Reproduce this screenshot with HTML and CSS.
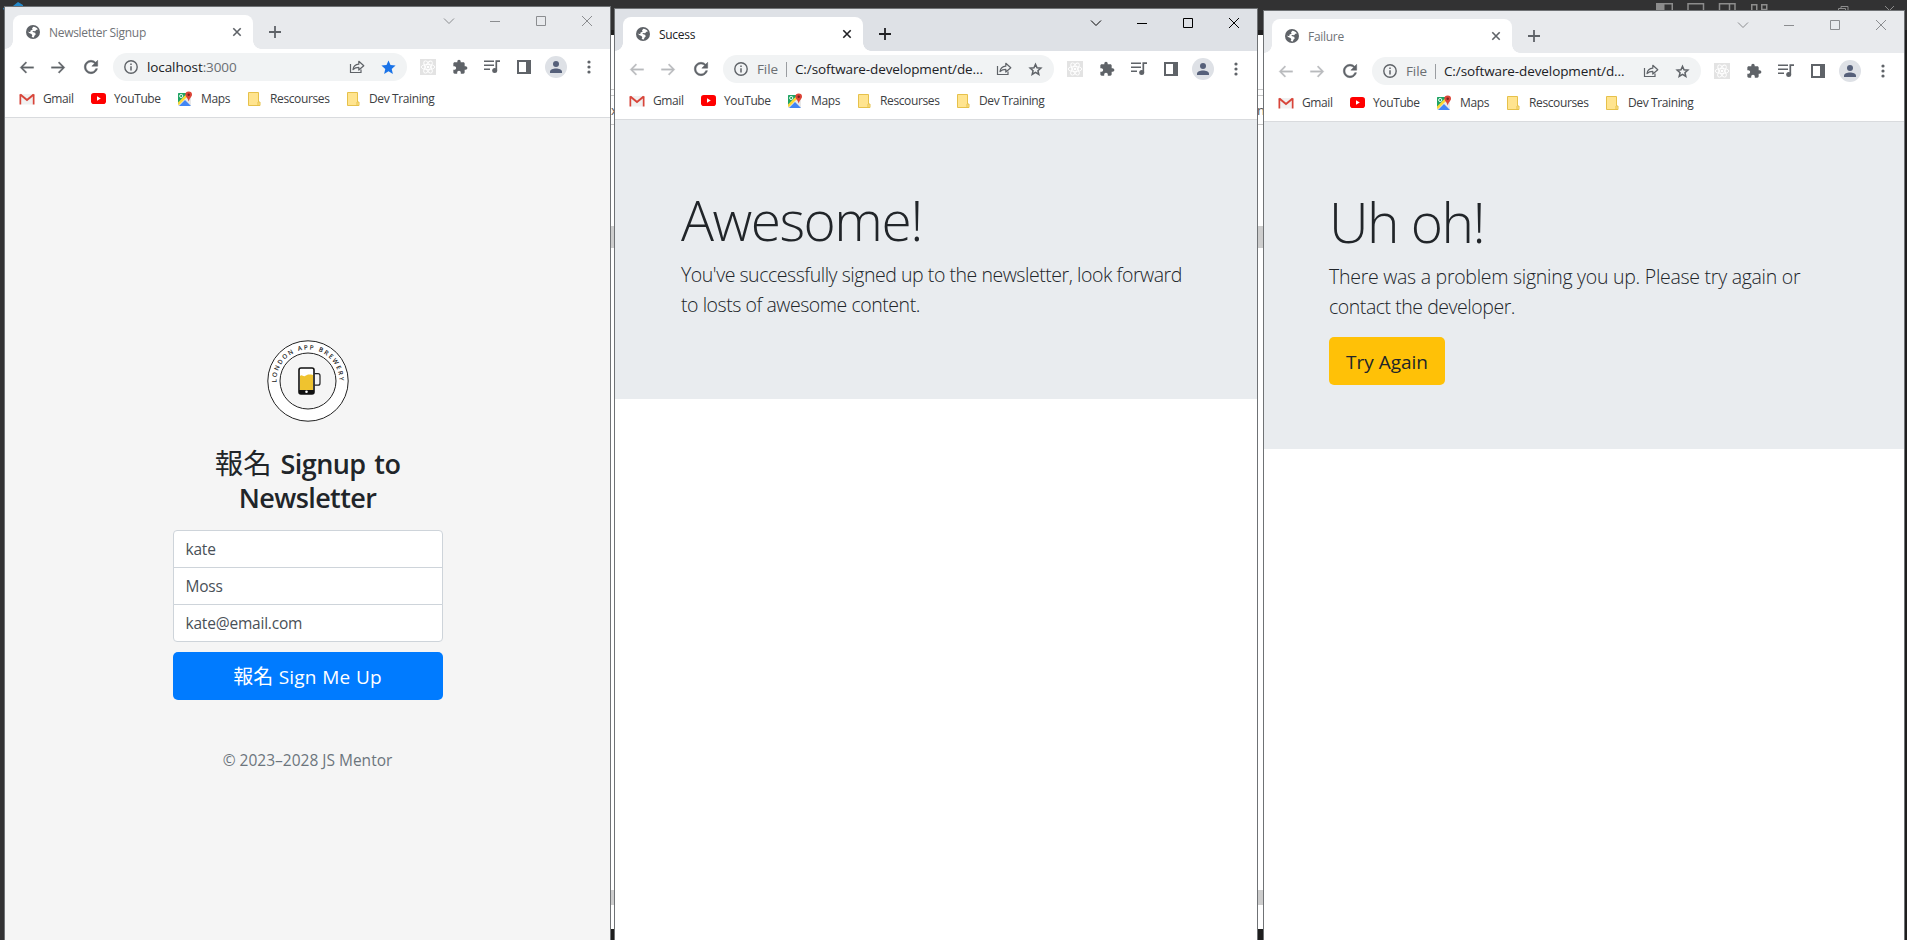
FILE: index.html
```html
<!DOCTYPE html>
<html lang="en">
<head>
<meta charset="utf-8">
<title>Newsletter Signup</title>
<link rel="stylesheet" href="styles.css">
</head>
<body>
<svg class="defs" width="0" height="0">
  <symbol id="globe" viewBox="0 0 14 14"><circle cx="7" cy="7" r="7" fill="#5f6368"/><path d="M7.300 1.700c1.800.1 3.600 1 4.600 2.800l-1.500.2-1.300 1.600-1.600-.3-1.300.5 1.700 1.100 1.300.2.500 1.600-1.300 1.400-.5 1.700-2.300-.5.700-1.500-.8-1.400-1.900-.8L1.600 6.600l1.500.3 1.200 0 .3-1.400 2-.7L6 3.500z" fill="#fff"/></symbol>
  <symbol id="x" viewBox="0 0 10 10"><path d="M1.300 1.300l7.400 7.400M8.700 1.300L1.300 8.700" fill="none" stroke="currentColor" stroke-width="1.600"/></symbol>
  <symbol id="plus" viewBox="0 0 12 12"><path d="M6 0v12M0 6h12" fill="none" stroke="currentColor" stroke-width="1.800"/></symbol>
  <symbol id="chev" viewBox="0 0 12 12"><path d="M1 3.500l5 5 5-5" fill="none" stroke="currentColor"/></symbol>
  <symbol id="min" viewBox="0 0 10 10"><path d="M0 5.500h10" fill="none" stroke="currentColor"/></symbol>
  <symbol id="max" viewBox="0 0 10 10"><path d="M.5.5h9v9h-9z" fill="none" stroke="currentColor"/></symbol>
  <symbol id="close" viewBox="0 0 10 10"><path d="M0 0l10 10M10 0L0 10" fill="none" stroke="currentColor"/></symbol>
  <symbol id="back" viewBox="0 0 24 24"><path d="M22 11H6.830l5.590-5.590L11 4l-8 8 8 8 1.410-1.410L6.830 13H22z" fill="currentColor" stroke="currentColor" stroke-width=".5"/></symbol>
  <symbol id="reload" viewBox="0 0 24 24"><path d="M17.650 6.350C16.200 4.900 14.210 4 12 4c-4.420 0-7.990 3.580-7.990 8s3.570 8 7.990 8c3.730 0 6.840-2.550 7.730-6h-2.080c-.82 2.330-3.040 4-5.650 4-3.310 0-6-2.690-6-6s2.690-6 6-6c1.660 0 3.140.69 4.220 1.780L13 11h7V4z" fill="currentColor" stroke="currentColor" stroke-width=".6"/></symbol>
  <symbol id="info" viewBox="0 0 14 14"><circle cx="7" cy="7" r="6.200" fill="none" stroke="#5f6368" stroke-width="1.400"/><path d="M7 6.200v4.300M7 3.500v1.500" stroke="#5f6368" stroke-width="1.500"/></symbol>
  <symbol id="share" viewBox="0 0 16 16"><path d="M1.500 5v8.500h10.500v-3" fill="none" stroke="#5f6368" stroke-width="1.200"/><path d="M4 10.500c.4-3 2.200-5 5.800-5.300V2.300L14.800 6.800 9.800 11V8.300C7.300 8.300 5.500 9 4 10.500z" fill="none" stroke="#5f6368" stroke-width="1.200" stroke-linejoin="round"/></symbol>
  <symbol id="star" viewBox="0 0 24 24"><path d="M12 17.270L18.180 21l-1.640-7.030L22 9.240l-7.190-.61L12 2 9.190 8.630 2 9.240l5.460 4.730L5.820 21z" fill="#1a73e8"/></symbol>
  <symbol id="staro" viewBox="0 0 24 24"><path d="M12 16.200L16.700 19l-1.250-5.300 4.100-3.600-5.400-.5L12 4.700 9.850 9.600l-5.400.5 4.100 3.600L7.300 19z" fill="none" stroke="#5f6368" stroke-width="2.100"/></symbol>
  <symbol id="react" viewBox="0 0 16 16"><path d="M0 0h16v16H0z" fill="#e3e3e3"/><g fill="none" stroke="#fff" stroke-width=".9"><ellipse cx="8" cy="8" rx="6.800" ry="2.600"/><ellipse cx="8" cy="8" rx="6.800" ry="2.600" transform="rotate(60 8 8)"/><ellipse cx="8" cy="8" rx="6.800" ry="2.600" transform="rotate(120 8 8)"/></g><circle cx="8" cy="8" r="1.300" fill="#fff"/></symbol>
  <symbol id="puzzle" viewBox="0 0 24 24"><path d="M20.500 11H19V7c0-1.100-.9-2-2-2h-4V3.500C13 2.120 11.880 1 10.500 1S8 2.120 8 3.500V5H4c-1.100 0-1.990.9-1.990 2v3.800H3.500c1.490 0 2.700 1.210 2.700 2.700s-1.210 2.700-2.700 2.700H2V20c0 1.100.9 2 2 2h3.800v-1.500c0-1.490 1.210-2.700 2.700-2.700s2.700 1.210 2.700 2.700V22H17c1.100 0 2-.9 2-2v-4h1.500c1.380 0 2.500-1.120 2.500-2.500S21.880 11 20.500 11z" fill="#5f6368"/></symbol>
  <symbol id="queue" viewBox="0 0 16 14"><path d="M0 1.200h10M0 5.200h10M0 9.200h6" stroke="#5f6368" stroke-width="1.600"/><path d="M12.300 10.500V1.200h3.700" fill="none" stroke="#5f6368" stroke-width="1.700"/><circle cx="10.700" cy="10.600" r="2.500" fill="#5f6368"/></symbol>
  <symbol id="panel" viewBox="0 0 14 14"><path d="M1 1h12v12H1z" fill="#fff" stroke="#5f6368" stroke-width="2"/><path d="M9 1h4v12H9z" fill="#5f6368"/></symbol>
  <symbol id="avatar" viewBox="0 0 22 22"><circle cx="11" cy="11" r="11" fill="#dee1e6"/><circle cx="11" cy="8" r="3" fill="#56607a"/><path d="M5 17v-1.300c0-2.200 3.200-3.200 6-3.200s6 1 6 3.200V17z" fill="#56607a"/></symbol>
  <symbol id="dots" viewBox="0 0 4 14"><g fill="#5f6368"><circle cx="2" cy="2" r="1.600"/><circle cx="2" cy="7" r="1.600"/><circle cx="2" cy="12" r="1.600"/></g></symbol>
  <symbol id="gmail" viewBox="0 0 16 12"><path d="M2 1h12v10.500H2z" fill="#f1f1f1"/><path d="M.5 11.500V1.200h1.700V11.500zM13.800 11.500V1.200h1.700V11.500z" fill="#d8453a"/><path d="M1.300 1.500L8 7l6.700-5.500" fill="none" stroke="#d8453a" stroke-width="2"/></symbol>
  <symbol id="youtube" viewBox="0 0 15 11"><rect width="15" height="11" rx="2.800" fill="#f00"/><path d="M6 3.200v4.600L9.800 5.500z" fill="#fff"/></symbol>
  <symbol id="maps" viewBox="0 0 16 16"><rect x="1" y="2" width="13" height="13" rx="1" fill="#e8e8e8"/><path d="M1 3c0-.6.400-1 1-1h9L1 13z" fill="#1fa463"/><path d="M2 15l6-6 6 6z" fill="#4285f4"/><path d="M1 11.500L10.500 2H12v2L1.500 14.500z" fill="#fdd835"/><circle cx="4.200" cy="5" r="1.600" fill="none" stroke="#fff" stroke-width=".9"/><path d="M11.700.5a3.300 3.300 0 0 1 3.300 3.300c0 2-2.300 3-3.300 6.700-1-3.700-3.300-4.700-3.300-6.700A3.300 3.300 0 0 1 11.700.5z" fill="#dc4437"/><circle cx="11.700" cy="3.800" r="1.200" fill="#7b231e"/></symbol>
  <symbol id="folder" viewBox="0 0 13 14"><path d="M.5.500h10v9.500h1.500v3.500H.5z" fill="#ffe48f" stroke="#e6c14b"/><path d="M10 10v3.500" stroke="#e6c14b"/></symbol>
</svg>

<main class="desktop">
  <div class="behind"><i class="taskline"></i><span class="under-text left">x</span><span class="under-text">nu</span><i class="thumb upper"></i><i class="thumb lower"></i></div>
  <svg class="code-logo" width="20" height="14" viewBox="0 0 20 14"><path d="M10 6l5-4 5 3v2h-10zM0 8l3-1v8z" fill="#2489ca"/></svg>
  <svg class="layout-icons" width="250" height="9" viewBox="0 0 250 9" fill="none" stroke="#8c8c8c">
    <path d="M.75 9V.75h15.500V9M32 9V.75h15.500V9M63.500 9V.75h15.500V9M73.500 1v8" stroke-width="1.500"/><path d="M1 1h7v8H1z" fill="#8c8c8c"/><path d="M95.750 9V1.750h5V9M105.750 6.500v-4.750h5v4.750z" stroke-width="1.500"/>
    <path d="M182.500 9V5.500h7V9M185 5V3.500h7V9M229 3l9 9M238 3l-9 9"/>
  </svg>

  <section class="window signup inactive">
    <header class="strip">
      <div class="tab"><svg class="fav"><use href="#globe"/></svg><span class="tab-title">Newsletter Signup</span><svg class="tab-x"><use href="#x"/></svg></div>
      <svg class="new-tab"><use href="#plus"/></svg>
      <div class="controls"><svg class="chev"><use href="#chev"/></svg><svg><use href="#min"/></svg><svg><use href="#max"/></svg><svg><use href="#close"/></svg></div>
    </header>
    <nav class="toolbar">
      <svg class="nav-icon"><use href="#back"/></svg><svg class="nav-icon forward"><use href="#back"/></svg><svg class="nav-icon reload"><use href="#reload"/></svg>
      <div class="omnibox"><svg class="info"><use href="#info"/></svg><span class="url">localhost<span class="muted">:3000</span></span><svg class="share"><use href="#share"/></svg><svg class="star"><use href="#star"/></svg></div>
      <div class="tools"><svg class="react"><use href="#react"/></svg><svg class="puzzle"><use href="#puzzle"/></svg><svg class="queue"><use href="#queue"/></svg><svg class="panel"><use href="#panel"/></svg><svg class="avatar"><use href="#avatar"/></svg><svg class="dots"><use href="#dots"/></svg></div>
    </nav>
    <nav class="bookmarks"><a class="gmail"><svg><use href="#gmail"/></svg>Gmail</a><a class="youtube"><svg><use href="#youtube"/></svg>YouTube</a><a class="maps"><svg><use href="#maps"/></svg>Maps</a><a class="folder res"><svg><use href="#folder"/></svg>Rescourses</a><a class="folder dev"><svg><use href="#folder"/></svg>Dev Training</a></nav>
    <div class="page">
      <form class="form">
        <svg class="brand" width="82" height="82" viewBox="0 0 82 82">
          <circle cx="41" cy="41" r="34.200" fill="none" stroke="#fff" stroke-width="12.200"/>
          <circle cx="41" cy="41" r="40.200" fill="none" stroke="#222" stroke-width="1"/>
          <circle cx="41" cy="41" r="28" fill="none" stroke="#222" stroke-width="1"/>
          <path id="arc" d="M9.600 43.500A31.500 31.500 0 1 1 72.400 43.500" fill="none"/>
          <text class="ring"><textPath href="#arc" startOffset="1" textLength="100">LONDON APP BREWERY</textPath></text>
          <rect x="32" y="28" width="15" height="26" rx="2" fill="#fff" stroke="#111" stroke-width="1.600"/>
          <path d="M33 36c2-2 3 1 5 0s3-2 8-1v15H33z" fill="#efc32f"/><path d="M32 50h15v4H32z" fill="#111"/><circle cx="39.500" cy="51.800" r="1.300" fill="#fff"/>
          <path d="M47.500 33.700h3.500a2 2 0 0 1 2 2v7.500a2 2 0 0 1-2 2h-3.500" fill="none" stroke="#222" stroke-width="1.200"/>
        </svg>
        <h1><span class="han">報名</span> Signup to<br>Newsletter</h1>
        <div class="field first">kate</div>
        <div class="field">Moss</div>
        <div class="field last">kate@email.com</div>
        <button type="button" class="btn primary"><span class="han">報名</span> Sign Me Up</button>
        <p class="copyright">© 2023–2028 JS Mentor</p>
      </form>
    </div>
  </section>

  <section class="window success">
    <header class="strip">
      <div class="tab"><svg class="fav"><use href="#globe"/></svg><span class="tab-title">Sucess</span><svg class="tab-x"><use href="#x"/></svg></div>
      <svg class="new-tab"><use href="#plus"/></svg>
      <div class="controls"><svg class="chev"><use href="#chev"/></svg><svg><use href="#min"/></svg><svg><use href="#max"/></svg><svg><use href="#close"/></svg></div>
    </header>
    <nav class="toolbar">
      <svg class="nav-icon off"><use href="#back"/></svg><svg class="nav-icon forward off"><use href="#back"/></svg><svg class="nav-icon reload"><use href="#reload"/></svg>
      <div class="omnibox"><svg class="info"><use href="#info"/></svg><span class="scheme">File</span><span class="url">C:/software-development/de...</span><svg class="share"><use href="#share"/></svg><svg class="star"><use href="#staro"/></svg></div>
      <div class="tools"><svg class="react"><use href="#react"/></svg><svg class="puzzle"><use href="#puzzle"/></svg><svg class="queue"><use href="#queue"/></svg><svg class="panel"><use href="#panel"/></svg><svg class="avatar"><use href="#avatar"/></svg><svg class="dots"><use href="#dots"/></svg></div>
    </nav>
    <nav class="bookmarks"><a class="gmail"><svg><use href="#gmail"/></svg>Gmail</a><a class="youtube"><svg><use href="#youtube"/></svg>YouTube</a><a class="maps"><svg><use href="#maps"/></svg>Maps</a><a class="folder res"><svg><use href="#folder"/></svg>Rescourses</a><a class="folder dev"><svg><use href="#folder"/></svg>Dev Training</a></nav>
    <div class="page">
      <div class="jumbotron">
        <h1>Awesome!</h1>
        <p class="lead">You've successfully signed up to the newsletter, look forward<br>to losts of awesome content.</p>
      </div>
    </div>
  </section>

  <section class="window failure inactive">
    <header class="strip">
      <div class="tab"><svg class="fav"><use href="#globe"/></svg><span class="tab-title">Failure</span><svg class="tab-x"><use href="#x"/></svg></div>
      <svg class="new-tab"><use href="#plus"/></svg>
      <div class="controls"><svg class="chev"><use href="#chev"/></svg><svg><use href="#min"/></svg><svg><use href="#max"/></svg><svg><use href="#close"/></svg></div>
    </header>
    <nav class="toolbar">
      <svg class="nav-icon off"><use href="#back"/></svg><svg class="nav-icon forward off"><use href="#back"/></svg><svg class="nav-icon reload"><use href="#reload"/></svg>
      <div class="omnibox"><svg class="info"><use href="#info"/></svg><span class="scheme">File</span><span class="url">C:/software-development/d...</span><svg class="share"><use href="#share"/></svg><svg class="star"><use href="#staro"/></svg></div>
      <div class="tools"><svg class="react"><use href="#react"/></svg><svg class="puzzle"><use href="#puzzle"/></svg><svg class="queue"><use href="#queue"/></svg><svg class="panel"><use href="#panel"/></svg><svg class="avatar"><use href="#avatar"/></svg><svg class="dots"><use href="#dots"/></svg></div>
    </nav>
    <nav class="bookmarks"><a class="gmail"><svg><use href="#gmail"/></svg>Gmail</a><a class="youtube"><svg><use href="#youtube"/></svg>YouTube</a><a class="maps"><svg><use href="#maps"/></svg>Maps</a><a class="folder res"><svg><use href="#folder"/></svg>Rescourses</a><a class="folder dev"><svg><use href="#folder"/></svg>Dev Training</a></nav>
    <div class="page">
      <div class="jumbotron">
        <h1>Uh oh!</h1>
        <p class="lead"><span class="wide">There was a problem signing you up. Please try again or</span><br>contact the developer.</p>
        <button type="button" class="btn warning">Try Again</button>
      </div>
    </div>
  </section>
</main>
</body>
</html>
```
FILE: styles.css
```css
* { box-sizing: border-box; }
body { margin: 0; font-family: "Open Sans", "Noto Sans", "Noto Sans CJK TC", sans-serif; color: #212529; overflow: hidden; }
svg { display: block; flex: none; }
.defs { position: absolute; }
.desktop { position: relative; width: 1907px; height: 940px; overflow: hidden; background: #323233; }

/* editor window that shows through the gaps */
.behind { position: absolute; left: 600px; top: 30px; width: 1307px; height: 910px; background: linear-gradient(#1f1f1f 5px, #fff 5px 899px, #1e1e1e 899px); }
.behind::after { content: ""; position: absolute; left: 1303px; top: 0; width: 4px; height: 910px; background: #1e1e1e; }
.under-text { position: absolute; left: 657px; top: 71px; font-size: 13px; color: #555; }
.under-text.left { left: 11px; }
.thumb { position: absolute; left: 0; width: 680px; background: #cdcdcd; }
.thumb.upper { top: 196px; height: 22px; }
.thumb.lower { top: 860px; height: 15px; }
.taskline { position: absolute; left: 0; width: 680px; top: 59px; height: 36px; border-top: 1px solid #c8c8c8; border-bottom: 1px solid #c8c8c8; background: linear-gradient(#fff 5px, #c8c8c8 5px 6px, transparent 6px); }
.code-logo { position: absolute; left: 3px; top: 0; }
.layout-icons { position: absolute; left: 1656px; top: 3px; }

.window { position: absolute; display: flex; flex-direction: column; bottom: 0; background: #fff; border-top: 1px solid #6f7275; border-right: 1px solid #6f7275; box-shadow: -1px 0 #6f7275; }
.signup { left: 5px; width: 606px; top: 6px; }
.success { left: 615px; width: 643px; top: 8px; }
.failure { left: 1264px; width: 641px; top: 10px; }

.strip { display: flex; height: 42px; padding: 8px 0 0 8px; background: #dee1e6; color: #202124; }
.inactive .strip { background: #e8eaed; color: #5f6368; }
.tab { position: relative; display: flex; align-items: center; width: 240px; height: 34px; padding: 0 11px 0 13px; border-radius: 8px 8px 0 0; background: #fff; }
.tab::before, .tab::after { content: ""; position: absolute; bottom: 0; width: 8px; height: 8px; }
.tab::before { left: -8px; background: radial-gradient(circle at 0 0, transparent 7.500px, #fff 8px); }
.tab::after { right: -8px; background: radial-gradient(circle at 100% 0, transparent 7.500px, #fff 8px); }
.fav { width: 14px; height: 14px; margin-right: 9px; }
.tab-title { flex: 1; font-size: 12px; letter-spacing: -.3px; white-space: nowrap; }
.inactive .tab-title { color: #6f7377; }
.tab-x { width: 10px; height: 10px; }
.new-tab { width: 12px; height: 12px; margin: 11px 0 0 16px; }
.controls { display: flex; align-items: center; gap: 36px; height: 12px; margin: 0 18px 0 auto; color: #000; }
.inactive .controls { color: #8b8d90; }
.controls svg { width: 10px; height: 10px; }
.controls .chev { width: 12px; height: 12px; margin-right: -1px; }

.toolbar { display: flex; align-items: center; height: 36px; padding: 0 19px 0 13px; color: #5f6368; }
.nav-icon { width: 17px; height: 17px; margin-right: 15px; }
.forward { transform: scaleX(-1); }
.reload { width: 20px; height: 20px; margin: 0 12px 0 -1px; }
.off { color: #b9bbbe; }
.omnibox { display: flex; flex: 1; align-items: center; height: 28px; padding: 0 10px 0 11px; border-radius: 14px; background: #f1f3f4; font-size: 13.500px; letter-spacing: -.1px; color: #202124; }
.info { width: 14px; height: 14px; margin-right: 9px; }
.url { flex: 1; white-space: nowrap; }
.muted { color: #6b6f73; }
.scheme { padding-right: 8px; margin-right: 8px; border-right: 1px solid #9a9da1; line-height: 15px; color: #6b6f73; }
.share { width: 16px; height: 16px; margin-right: 15px; }
.star { width: 17px; height: 17px; }
.tools { display: flex; align-items: center; padding-left: 13px; }
.react { width: 16px; height: 16px; margin-right: 16px; }
.puzzle { width: 16px; height: 16px; margin-right: 16px; }
.queue { width: 16px; height: 14px; margin-right: 17px; }
.panel { width: 14px; height: 14px; margin-right: 14px; }
.avatar { width: 22px; height: 22px; margin-right: 20px; }
.dots { width: 4px; height: 14px; }

.bookmarks { display: flex; align-items: center; height: 33px; padding: 0 0 5px 14px; border-bottom: 1px solid #d9dbde; font-size: 12px; letter-spacing: -.38px; color: #3c4043; }
.bookmarks a { display: flex; align-items: center; white-space: nowrap; }
.gmail { width: 72px; }
.youtube { width: 86px; }
.maps { width: 71px; }
.res { width: 99px; }
.bookmarks svg { margin-right: 8px; }
.gmail svg { width: 16px; height: 12px; }
.youtube svg { width: 15px; height: 11px; }
.maps svg { width: 16px; height: 16px; }
.folder svg { width: 13px; height: 14px; margin-right: 9px; }

.page { flex: 1; }
.signup .page { display: flex; justify-content: center; padding-top: 222px; background: #f5f5f5; }
.form { display: flex; flex-direction: column; width: 270px; text-align: center; }
.brand { align-self: center; margin-bottom: 25px; }
.ring { font: 600 6.300px "Open Sans", sans-serif; fill: #222; }
.form h1 { margin: 0 0 16px; font-size: 27px; font-weight: 600; line-height: 33.600px; letter-spacing: -.6px; word-spacing: 2.500px; white-space: nowrap; }
.han { font-family: "Noto Sans CJK TC", sans-serif; font-weight: 400; letter-spacing: 0; line-height: 1; }
.form h1 .han { font-size: 28.500px; }
.field { height: 38px; margin-bottom: -1px; padding: 0 12px; border: 1px solid #ced4da; background: #fff; font-size: 15.500px; line-height: 37px; letter-spacing: -.2px; text-align: left; color: #495057; }
.first { border-radius: 4px 4px 0 0; }
.last { margin-bottom: 10px; border-radius: 0 0 4px 4px; }
.btn { height: 48px; padding: 0; border: 0; border-radius: 5px; font: 19px/48px "Open Sans", sans-serif; white-space: nowrap; }
.primary { background: #007bff; color: #fff; letter-spacing: .2px; word-spacing: .4px; line-height: 50px; }
.primary .han { font-size: 20px; }
.copyright { margin: 48px 0 0; font-size: 15.500px; line-height: 24px; color: #6c757d; }

.jumbotron { padding: 66px 0 64px 65px; background: #e9ecef; }
.jumbotron h1 { margin: 0 0 7px; font-size: 55px; font-weight: 300; line-height: 67.200px; letter-spacing: -1.500px; white-space: nowrap; }
.success h1 { padding-left: 1px; }
.lead { margin: 0 0 15px; font-size: 19.500px; font-weight: 300; line-height: 30px; letter-spacing: -.46px; white-space: nowrap; }
.success .lead { padding-left: 1px; margin-bottom: 14.800px; }
.wide { letter-spacing: -.27px; }
.warning { display: block; width: 116px; background: #ffc107; color: #212529; line-height: 50px; }
```
